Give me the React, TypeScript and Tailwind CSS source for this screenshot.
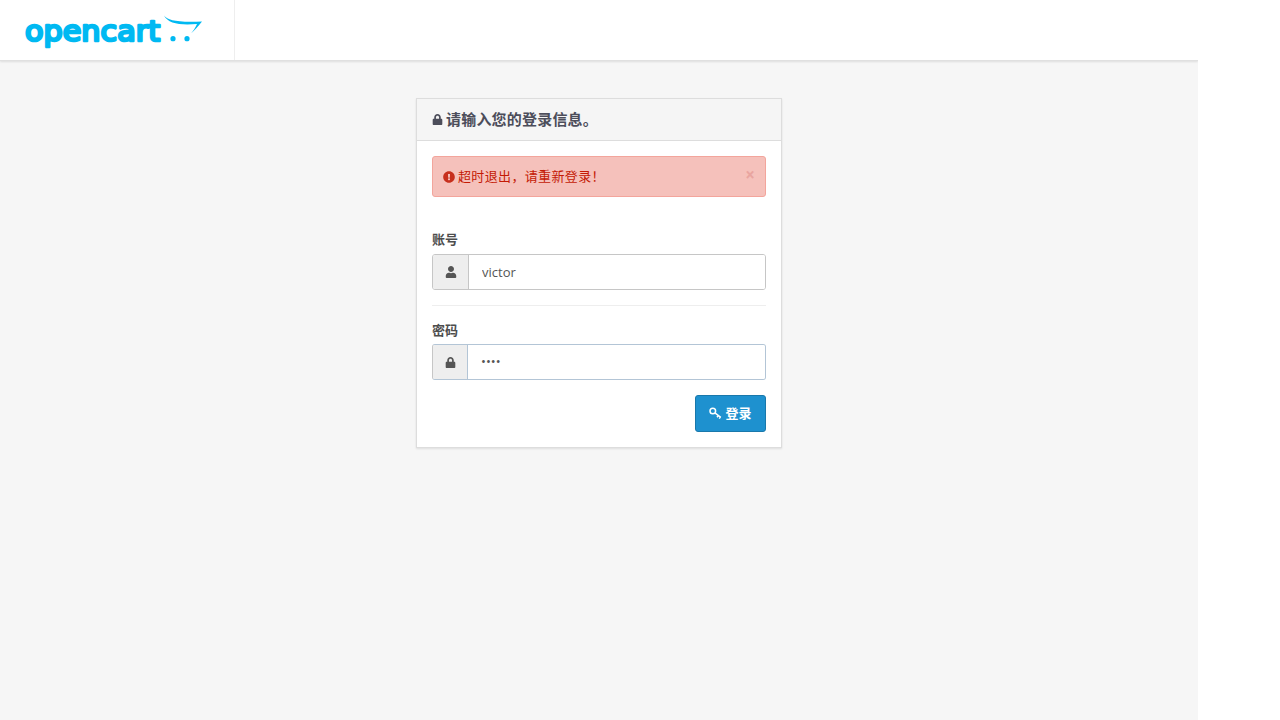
import { FaExclamationCircle, FaLock, FaUser } from "react-icons/fa";

const fontStack = "font-['Open_Sans','Noto_Sans_CJK_SC',sans-serif]";

function Logo() {
  return (
    <svg width="180" height="44" viewBox="0 0 180 44" fill="none" aria-label="opencart">
      <text
        x="0"
        y="33"
        fontFamily="'DejaVu Sans', sans-serif"
        fontSize="29"
        textLength="135"
        lengthAdjust="spacingAndGlyphs"
        fill="#00b9f2"
        stroke="#00b9f2"
        strokeWidth="2.6"
        strokeLinejoin="round"
      >
        opencart
      </text>
      <path d="M139 7.5C143 12.5 152 14.5 177 13.5C173 18.5 170 22 166 25.5C168.5 22.5 170.5 19.5 172 16C155 17.5 143 15.5 139 7.5Z" fill="#00b9f2" />
      <circle cx="148" cy="30.7" r="2.6" fill="#00b9f2" />
      <circle cx="162" cy="30.7" r="2.6" fill="#00b9f2" />
    </svg>
  );
}

function KeyIcon() {
  return (
    <svg width="13" height="13" viewBox="0 0 13 13" fill="none" stroke="currentColor" aria-hidden="true">
      <circle cx="3.8" cy="4" r="2.8" strokeWidth="1.5" />
      <path d="M5.9 5.9L11.8 10.4M9.4 8.6L8 10.2M11.4 10.1L10.2 11.6" strokeWidth="1.5" />
    </svg>
  );
}

export default function App() {
  return (
    <div className={`h-[720px] w-[1198px] overflow-hidden bg-[#f6f6f6] text-[13px] text-[#4d4d4d] ${fontStack}`}>
      <header className="flex h-[61px] border-b border-[#e0e0e0] bg-white shadow-[0_1px_2px_rgba(0,0,0,0.1)]">
        <div className="w-[235px] border-r border-[#eeeeee] pl-[25px] pt-[8px]">
          <Logo />
        </div>
      </header>

      <main className="flex justify-center pt-[37px]">
        <div className="h-[350px] w-[366px] border border-[#dddddd] bg-white shadow-[0_1px_2px_rgba(0,0,0,0.1)]">
          <div className="flex h-[42px] items-center gap-[3px] border-b border-[#dddddd] bg-[#f5f5f5] pl-[15px] text-[15px] font-bold text-[#4c4d5a]">
            <FaLock className="size-[11px]" aria-hidden="true" />
            <span className="tracking-[0.2px]">请输入您的登录信息。</span>
          </div>

          <div className="p-[15px]">
            <div className="flex h-[41px] items-center rounded-[3px] border border-[#f3a59c] bg-[#f5c1bb] px-[10px]">
              <FaExclamationCircle className="mr-[3px] size-[12px] text-[#c72f1d]" aria-hidden="true" />
              <span className="tracking-[0.35px] text-[#c41a05]">超时退出，请重新登录！</span>
              <span className="mb-[4px] ml-auto text-[17px] leading-none font-bold text-[#e9a5a0]">×</span>
            </div>

            <label className="mt-[33px] block leading-[18px] font-bold text-[#4d4d4d]">账号</label>
            <div className="mt-[6px] flex h-[36px] overflow-hidden rounded-[3px] border border-[#c6c6c6]">
              <div className="flex w-[36px] items-center justify-center border-r border-[#c6c6c6] bg-[#eeeeee]">
                <FaUser className="mb-[1px] size-[12px] text-[#555555]" aria-hidden="true" />
              </div>
              <input
                type="text"
                defaultValue="victor"
                className="min-w-0 flex-1 bg-white pl-[13px] pt-[1px] text-[#555555] outline-none"
              />
            </div>

            <div className="mt-[15px] border-t border-[#eeeeee]" />

            <label className="mt-[15px] block leading-[18px] font-bold text-[#4d4d4d]">密码</label>
            <div className="mt-[5px] flex h-[36px] overflow-hidden rounded-[3px] border border-[#b3c5d6] border-l-[#c6c6c6]">
              <div className="flex w-[35px] items-center justify-center border-r border-[#b3c5d6] bg-[#eeeeee]">
                <FaLock className="size-[11px] text-[#555555]" aria-hidden="true" />
              </div>
              <input
                type="password"
                defaultValue="1234"
                className="min-w-0 flex-1 bg-white pl-[13px] text-[#555555] outline-none"
              />
            </div>

            <div className="mt-[15px] flex justify-end">
              <button
                type="button"
                className="flex h-[37px] w-[71px] items-center justify-center gap-[3px] rounded-[3px] border border-[#1978ab] bg-[#1e91cf] font-bold text-white"
              >
                <KeyIcon />
                登录
              </button>
            </div>
          </div>
        </div>
      </main>
    </div>
  );
}
